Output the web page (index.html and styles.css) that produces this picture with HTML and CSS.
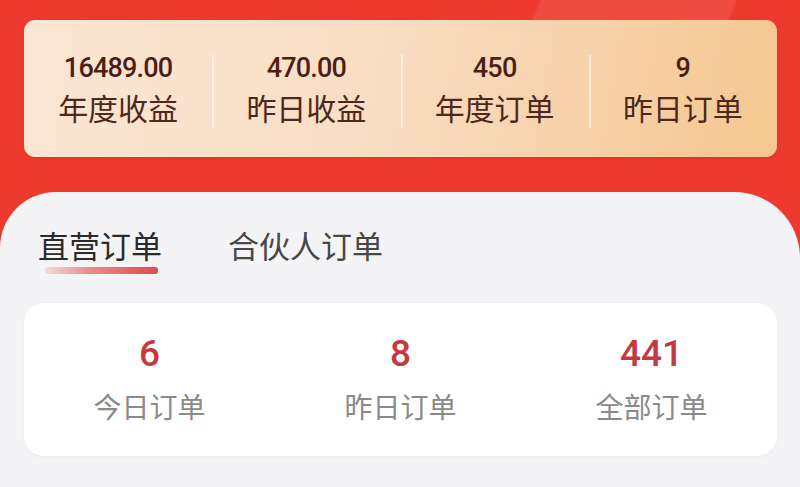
FILE: index.html
```html
<!DOCTYPE html>
<html lang="zh-CN">
<head>
<meta charset="utf-8">
<title>订单统计</title>
<link rel="stylesheet" href="styles.css">
</head>
<body>
<div class="page">
  <header class="header">
    <div class="stats">
      <div class="stat">
        <div class="stat-num">16489.00</div>
        <div class="stat-label">年度收益</div>
      </div>
      <div class="stat">
        <div class="stat-num">470.00</div>
        <div class="stat-label">昨日收益</div>
      </div>
      <div class="stat">
        <div class="stat-num">450</div>
        <div class="stat-label">年度订单</div>
      </div>
      <div class="stat">
        <div class="stat-num">9</div>
        <div class="stat-label">昨日订单</div>
      </div>
    </div>
  </header>
  <section class="panel">
    <nav class="tabs">
      <div class="tab tab-active">
        <span class="tab-text">直营订单</span>
        <span class="tab-bar"></span>
      </div>
      <div class="tab">
        <span class="tab-text">合伙人订单</span>
      </div>
    </nav>
    <div class="orders">
      <div class="order">
        <div class="order-num">6</div>
        <div class="order-label">今日订单</div>
      </div>
      <div class="order">
        <div class="order-num">8</div>
        <div class="order-label">昨日订单</div>
      </div>
      <div class="order">
        <div class="order-num">441</div>
        <div class="order-label">全部订单</div>
      </div>
    </div>
  </section>
</div>
</body>
</html>
```

FILE: styles.css
```css
html, body {
  margin: 0;
  padding: 0;
}
body {
  width: 800px;
  height: 487px;
  overflow: hidden;
  background: #ee3a2e;
  font-family: "Noto Sans CJK SC", "Noto Sans", sans-serif;
}
.page {
  display: flex;
  flex-direction: column;
  height: 487px;
  background:
    linear-gradient(112deg, rgba(255,255,255,0) 66%, rgba(255,255,255,0.09) 66.5%, rgba(255,255,255,0.09) 90%, rgba(255,255,255,0) 90.5%) top / 100% 40px no-repeat,
    #ee3a2e;
}
.header {
  padding: 20px 23px 0 24px;
}
.stats {
  height: 137px;
  box-sizing: border-box;
  padding-top: 31px;
  border-radius: 11px;
  background: linear-gradient(100deg, #fbe6d4 0%, #f9dec4 45%, #f7d1a8 75%, #f5c790 100%);
  display: grid;
  grid-template-columns: repeat(4, 1fr);
  align-items: start;
  box-shadow: 0 2px 4px rgba(160, 20, 10, 0.15);
}
.stat {
  position: relative;
  display: flex;
  flex-direction: column;
  align-items: center;
  color: #4b2218;
}
.stat + .stat::before {
  content: "";
  position: absolute;
  left: 0;
  top: 4px;
  bottom: 1px;
  width: 2px;
  background: rgba(255, 255, 255, 0.6);
}
.stat-num {
  font-family: Roboto, "Liberation Sans", sans-serif;
  font-weight: 500;
  font-size: 27px;
  line-height: 34px;
  letter-spacing: -0.8px;
  color: #4a1f16;
}
.stat-label {
  font-size: 30px;
  line-height: 44px;
  color: #4d281d;
}
.panel {
  flex: 1;
  margin-top: 35px;
  background: #f4f4f6;
  border-radius: 56px 66px 0 0;
  padding: 31px 23px 0 24px;
}
.tabs {
  display: flex;
  gap: 66px;
  padding-left: 14px;
}
.tab {
  display: flex;
  flex-direction: column;
}
.tab-text {
  font-size: 31px;
  line-height: 44px;
  color: #474747;
}
.tab-active .tab-text {
  color: #2a2a2a;
}
.tab-bar {
  display: block;
  margin-left: 7px;
  width: 113px;
  height: 7px;
  border-radius: 3px;
  background: linear-gradient(90deg, rgba(238, 140, 140, 0.25) 0%, #ec8a8a 40%, #e04a4c 100%);
}
.orders {
  margin-top: 29px;
  height: 153px;
  box-sizing: border-box;
  padding: 29px 0 0;
  background: #ffffff;
  border-radius: 20px;
  box-shadow: 0 1px 4px rgba(0, 0, 0, 0.04);
  display: grid;
  grid-template-columns: repeat(3, 1fr);
  align-items: start;
}
.order {
  display: flex;
  flex-direction: column;
  align-items: center;
}
.order-num {
  font-family: Roboto, "Liberation Sans", sans-serif;
  font-weight: 500;
  font-size: 37px;
  line-height: 44px;
  color: #c53a3e;
}
.order-label {
  margin-top: 10px;
  font-size: 28px;
  line-height: 40px;
  color: #8a8a8a;
}
```
